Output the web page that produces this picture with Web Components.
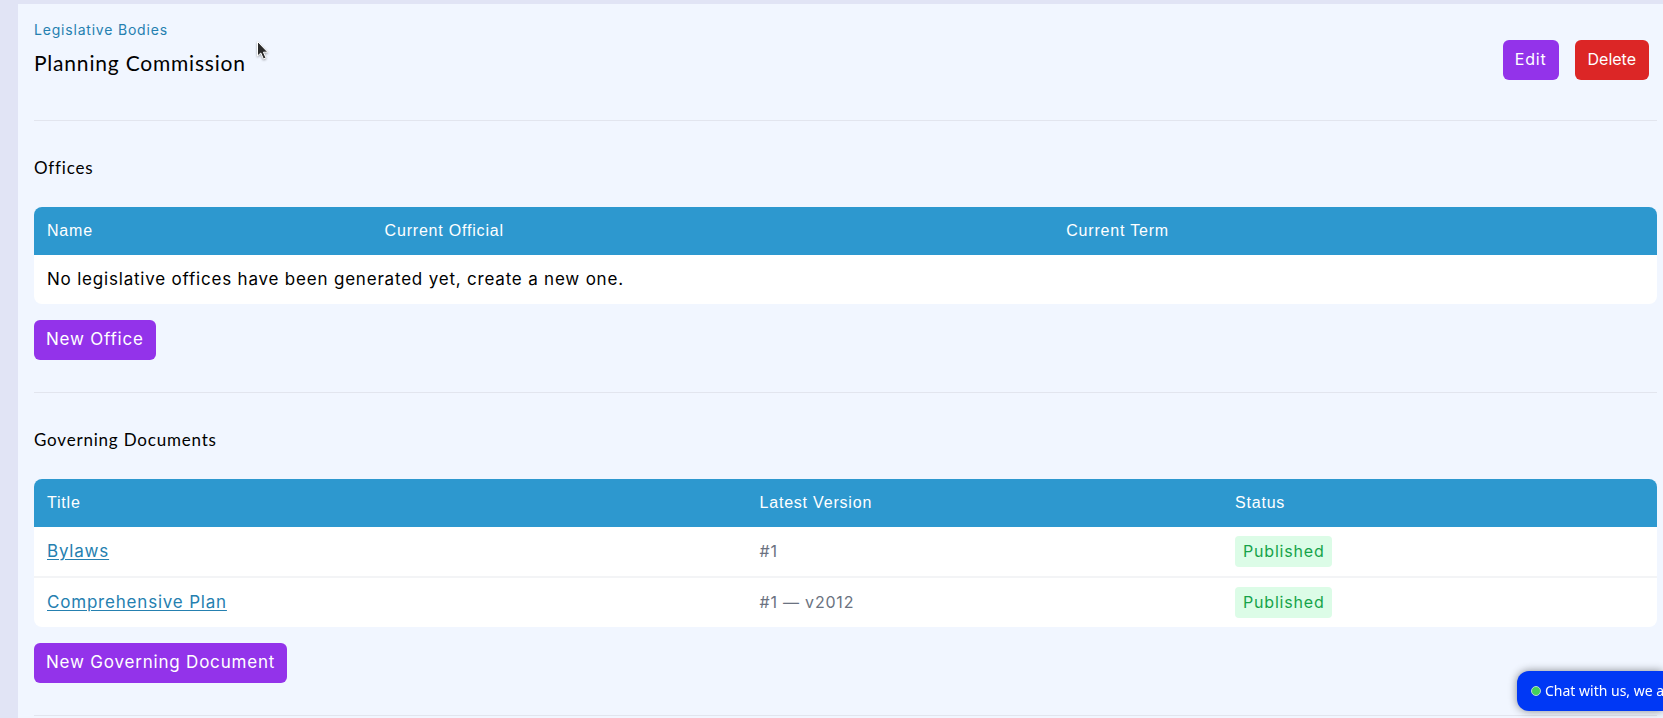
<!DOCTYPE html>
<html lang="en">
<head>
<meta charset="utf-8">
<title>Planning Commission</title>
<style>
html, body { margin: 0; min-height: 100%; }
body { background: #e1e4f5; color: #000; font: 16px/24px Inter, "Open Sans", sans-serif; letter-spacing: 0.05em; overflow-x: hidden; }
</style>
</head>
<body>
<admin-page>
  <page-header parent="Legislative Bodies" heading="Planning Commission">
    <action-button>Edit</action-button>
    <action-button tone="danger">Delete</action-button>
  </page-header>
  <page-section heading="Offices">
    <offices-table></offices-table>
    <action-button slot="action">New Office</action-button>
  </page-section>
  <page-section heading="Governing Documents">
    <documents-table></documents-table>
    <action-button slot="action">New Governing Document</action-button>
  </page-section>
</admin-page>
<chat-launcher>Chat with us, we a</chat-launcher>
<mouse-pointer></mouse-pointer>

<script>
function define(name, html) {
  customElements.define(name, class extends HTMLElement {
    constructor() {
      super();
      this.attachShadow({ mode: 'open' }).innerHTML = html;
    }
    connectedCallback() {
      for (const el of this.shadowRoot.querySelectorAll('[data-text]')) {
        el.textContent = this.getAttribute(el.dataset.text);
      }
    }
  });
}

const tableStyle = `
  :host { display: block; border-radius: 8px; overflow: hidden; background: #fff; }
  table { width: 100%; border-collapse: separate; border-spacing: 0; table-layout: fixed; }
  th, td { box-sizing: border-box; padding: 0 13px; text-align: left; font-weight: 400; }
  th { height: 48px; background: #2d98cf; color: #fff; font-family: "Liberation Sans", Arial, sans-serif; font-size: 16px; }
  td { height: 49px; padding-bottom: 2px; font-size: 17px; }
  td:has(status-badge) { padding-bottom: 0; }
  tr + tr td { height: 51px; border-top: 2px solid #f3f4f6; }
  a { color: #2580b0; text-underline-offset: 2px; }
  .muted { color: #6b7280; font-size: 16px; }`;

define('admin-page', `
  <style>
    :host { display: block; box-sizing: border-box; min-height: calc(100vh - 4px); margin: 4px 0 0 18px; padding: 0 6px 0 16px; background: #f1f6ff; }
    ::slotted(page-section:last-child) { border-bottom: 1px solid #e2e5ee; }
  </style>
  <slot></slot>`);

define('page-header', `
  <style>
    :host { display: flex; justify-content: space-between; align-items: flex-start; padding: 14px 8px 40px 0; }
    a { display: block; color: #2580b0; text-decoration: none; font-size: 14px; line-height: 24px; }
    h1 { margin: 4px 0 0; font: 400 21px/34px Lato, sans-serif; }
    .actions { display: flex; gap: 16px; padding-top: 22px; }
  </style>
  <div><a href="#" data-text="parent"></a><h1 data-text="heading"></h1></div>
  <div class="actions"><slot></slot></div>`);

define('page-section', `
  <style>
    :host { display: block; border-top: 1px solid #e2e5ee; padding: 32px 0; }
    h2 { margin: 0 0 24px; font: 400 17px/30px Lato, sans-serif; }
    .action { display: flex; margin-top: 16px; }
  </style>
  <h2 data-text="heading"></h2>
  <slot></slot>
  <div class="action"><slot name="action"></slot></div>`);

define('action-button', `
  <style>
    :host { display: block; }
    button { display: block; height: 40px; padding: 0 12px 2px; border: 0; border-radius: 6px; background: #9333ea; color: #fff; font: inherit; font-size: 16px; letter-spacing: inherit; cursor: pointer; }
    :host([slot="action"]) button { font-size: 17px; }
    :host([tone="danger"]) button { padding: 0 13px 2px; background: #dc2626; letter-spacing: normal; }
  </style>
  <button type="button"><slot></slot></button>`);

define('status-badge', `
  <style>
    :host { display: inline-block; padding: 3px 8px; border-radius: 4px; background: #dcfce7; color: #16a34a; font-size: 16px; line-height: 25px; vertical-align: middle; }
  </style>
  <slot></slot>`);

define('offices-table', `
  <style>${tableStyle}</style>
  <table>
    <colgroup><col style="width:20.8%"><col style="width:42%"><col style="width:37.2%"></colgroup>
    <thead><tr><th scope="col">Name</th><th scope="col">Current Official</th><th scope="col">Current Term</th></tr></thead>
    <tbody><tr><td colspan="3">No legislative offices have been generated yet, create a new one.</td></tr></tbody>
  </table>`);

define('documents-table', `
  <style>${tableStyle}</style>
  <table>
    <colgroup><col style="width:43.9%"><col style="width:29.3%"><col style="width:26.8%"></colgroup>
    <thead><tr><th scope="col">Title</th><th scope="col">Latest Version</th><th scope="col">Status</th></tr></thead>
    <tbody>
      <tr><td><a href="#">Bylaws</a></td><td class="muted">#1</td><td><status-badge>Published</status-badge></td></tr>
      <tr><td><a href="#">Comprehensive Plan</a></td><td class="muted">#1 — v2012</td><td><status-badge>Published</status-badge></td></tr>
    </tbody>
  </table>`);

define('chat-launcher', `
  <style>
    :host { position: fixed; right: 0; bottom: 7px; }
    button { display: flex; align-items: center; gap: 4px; box-sizing: border-box; width: 146px; height: 40px; padding: 0 0 0 14px; border: 0; border-radius: 12px 0 0 12px; background: #0038f5; color: #fff; font: 14px/24px "Noto Sans", sans-serif; white-space: nowrap; box-shadow: 0 0 8px rgba(0,0,0,.45); }
    i { flex: none; box-sizing: border-box; width: 10px; height: 10px; border: 1px solid #b9d9d3; border-radius: 50%; background: #43d15c; }
  </style>
  <button type="button"><i></i><span><slot></slot></span></button>`);

define('mouse-pointer', `
  <style>
    :host { position: absolute; left: 256px; top: 40px; pointer-events: none; filter: drop-shadow(0 1px 1px rgba(0,0,0,.35)); }
    svg { display: block; }
  </style>
  <svg width="14" height="22" viewBox="0 0 14 22" aria-hidden="true"><path d="M1.5 1.5V16l3.3-3 2.6 6 2.6-1.1-2.6-5.7h4.4Z" fill="#2b2b2b" stroke="#fff" stroke-width="1"/></svg>`);
</script>
</body>
</html>
